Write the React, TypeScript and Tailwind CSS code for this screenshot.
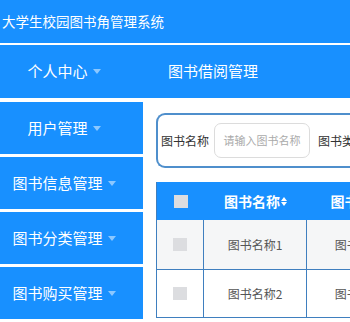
import React from 'react';

const menus = ['用户管理', '图书信息管理', '图书分类管理', '图书购买管理'];

const rows = [
  { name: '图书名称1', type: '图书分类1' },
  { name: '图书名称2', type: '图书分类2' },
];

function Caret() {
  return <span className="ml-[5px] inline-block h-0 w-0 border-x-[4px] border-t-[5px] border-x-transparent border-t-white/50 align-middle" />;
}

function SortIcon() {
  return (
    <span className="ml-[1px] inline-flex flex-col gap-[1px] align-middle">
      <span className="h-0 w-0 border-x-[3px] border-b-[4px] border-x-transparent border-b-white" />
      <span className="h-0 w-0 border-x-[3px] border-t-[4px] border-x-transparent border-t-white" />
    </span>
  );
}

export default function App() {
  return (
    <div
      className="flex h-[322px] w-[350px] flex-col gap-[2px] overflow-hidden bg-white"
      style={{ fontFamily: '"Noto Sans CJK SC", "Noto Sans", sans-serif' }}
    >
      {/* Title bar */}
      <div className="flex h-[43px] shrink-0 items-center bg-[#1890ff] pl-[2px] text-[13.5px] text-white">
        大学生校园图书角管理系统
      </div>

      {/* Top nav */}
      <div className="flex h-[53px] shrink-0 items-center bg-[#1890ff] text-[15px] text-white">
        <div className="flex w-[143px] items-center justify-center pr-[15px]">
          个人中心
          <Caret />
        </div>
        <div className="pl-[25px]">图书借阅管理</div>
      </div>

      <div className="flex flex-1 pt-[2px]">
        {/* Sidebar */}
        <div className="flex w-[143px] shrink-0 flex-col gap-[3px]">
          {menus.map((m) => (
            <div key={m} className="flex h-[52px] items-center justify-center bg-[#1890ff] pr-[15px] text-[15px] text-white">
              {m}
              <Caret />
            </div>
          ))}
        </div>

        {/* Content */}
        <div className="flex-1 overflow-hidden pl-[13px] pt-[11px]">
          <div className="flex h-[55px] w-[260px] items-center rounded-l-[9px] border-2 border-r-0 border-[#4f8fcc] pl-[3px]">
            <span className="text-[12px] text-[#333]">图书名称</span>
            <div className="ml-[5px] flex h-[35px] w-[96px] shrink-0 items-center justify-center rounded-[7px] border border-[#dcdcdc] text-[11px] text-[#aaa]">
              请输入图书名称
            </div>
            <span className="ml-[8px] whitespace-nowrap text-[12px] text-[#333]">图书类别</span>
          </div>

          <div className="mt-[14px] w-[260px] border-l border-[#3f7fbf]">
            <div className="flex h-[38px] bg-[#1890ff] text-[14px] font-bold text-white">
              <div className="flex w-[47px] shrink-0 items-center justify-center">
                <span className="h-[13px] w-[14px] bg-[#dcdde0]" />
              </div>
              <div className="flex w-[103px] shrink-0 items-center justify-center">
                图书名称
                <SortIcon />
              </div>
              <div className="flex w-[110px] shrink-0 items-center justify-center whitespace-nowrap">
                图书类别
                <SortIcon />
              </div>
            </div>
            {rows.map((r, i) => (
              <div
                key={r.name}
                className={`flex border-b border-[#3f7fbf] text-[12px] text-[#555] ${i === 0 ? 'h-[50px] bg-[#f5f6f7]' : 'h-[48px] bg-white'}`}
              >
                <div className="flex w-[47px] shrink-0 items-center justify-center border-r border-[#3f7fbf]">
                  <span className="h-[13px] w-[14px] bg-[#dcdde0]" />
                </div>
                <div className="flex w-[103px] shrink-0 items-center justify-center border-r border-[#3f7fbf]">
                  {r.name}
                </div>
                <div className="flex w-[110px] shrink-0 items-center justify-center whitespace-nowrap">
                  {r.type}
                </div>
              </div>
            ))}
          </div>
        </div>
      </div>
    </div>
  );
}
